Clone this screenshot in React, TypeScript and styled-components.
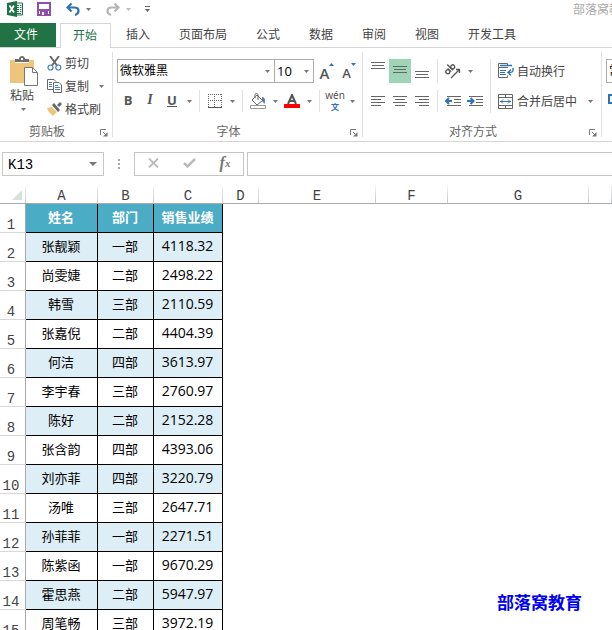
import React from "react";
import styled, { createGlobalStyle, css } from "styled-components";

const ui = `"Noto Sans CJK SC", sans-serif`;
const mono = `"Liberation Mono", "Noto Sans CJK SC", monospace`;

const GlobalStyle = createGlobalStyle`
  * { box-sizing: border-box; }
  body { margin: 0; background: #fff; overflow: hidden; }
  button, input, select { font: inherit; color: inherit; margin: 0; }
  svg { display: block; flex: none; }
`;

const Page = styled.div`
  display: flex;
  flex-direction: column;
  height: 100vh;
  overflow: hidden;
  background: #fff;
  color: #444;
  font: 12px/16px ${ui};
`;

const plainButton = css`
  display: flex;
  align-items: center;
  justify-content: center;
  padding: 0;
  border: 0;
  background: transparent;
  white-space: nowrap;
`;

/* Title bar */
const TitleBar = styled.header`
  display: flex;
  flex: none;
  align-items: center;
  height: 22px;
  padding: 0 0 4px 7px;
`;
const QuickButton = styled.button<{ $gap?: number }>`
  ${plainButton}
  margin-left: ${(p) => p.$gap ?? 0}px;
`;
const DocTitle = styled.span`
  flex: none;
  width: 39px;
  margin-left: auto;
  overflow: hidden;
  color: #aaa;
  white-space: nowrap;
`;

/* Tabs */
const TabBar = styled.nav`
  display: flex;
  flex: none;
  align-items: stretch;
  height: 26px;
  border-bottom: 1px solid #d5d5d5;
`;
const Tab = styled.button<{ $kind?: "file" | "active" }>`
  ${plainButton}
  flex: none;
  margin-top: 1px;
  padding: 0 14px 2px 15px;
  ${(p) =>
    p.$kind === "file" &&
    css`
      width: 56px;
      margin-right: 4px;
      padding: 0 4px 2px 0;
      background: #217346;
      color: #fff;
    `}
  ${(p) =>
    p.$kind === "active" &&
    css`
      width: 51px;
      margin-bottom: -1px;
      padding: 0 1px 3px 0;
      border: 1px solid #d5d5d5;
      border-bottom: 0;
      background: #fff;
      color: #217346;
    `}
`;

/* Ribbon */
const Ribbon = styled.section`
  display: flex;
  flex: none;
  height: 94px;
  padding: 4px 0;
  overflow: hidden;
  border-bottom: 1px solid #d5d5d5;
`;
const Group = styled.section`
  display: flex;
  flex: none;
  flex-direction: column;
  border-right: 1px solid #e1e1e1;
`;
const GroupBody = styled.div<{ $start: number; $end: number }>`
  display: flex;
  flex: 1;
  padding: 0 ${(p) => p.$end}px 0 ${(p) => p.$start}px;
`;
const GroupFooter = styled.footer`
  display: flex;
  align-items: center;
  height: 13px;
  color: #666;
`;
const GroupLabel = styled.span`
  flex: 1;
  padding-right: 6px;
  text-align: center;
`;
const Launcher = styled.button`
  ${plainButton}
  justify-content: flex-start;
  align-self: flex-end;
  width: 12px;
`;
const Rows = styled.div`
  display: flex;
  flex-direction: column;
  gap: 7px;
  padding-top: 7px;
`;
const Row = styled.div<{ $tall?: boolean }>`
  display: flex;
  align-items: stretch;
  height: ${(p) => (p.$tall ? 24 : 22)}px;
`;
const Tool = styled.button<{ $active?: boolean }>`
  ${plainButton}
  width: 22px;
  background: ${(p) => (p.$active ? "#9fd5b7" : "transparent")};
  color: #555;
  font: 700 13px/16px "Open Sans", sans-serif;
`;
const LetterTool = styled(Tool)`
  padding-bottom: 2px;
`;
const ItalicTool = styled(LetterTool)`
  font: italic 700 14px/16px "Liberation Serif", serif;
`;
const CaretButton = styled.button`
  ${plainButton}
  width: 12px;
`;
const MergeMore = styled(CaretButton)`
  margin-left: 7px;
`;
const Divider = styled.span`
  width: 1px;
  margin: 0 4px;
  background: #e1e1e1;
`;
const TallDivider = styled(Divider)`
  margin: 7px 4px;
  height: 54px;
`;
const PasteButton = styled.button`
  ${plainButton}
  flex-direction: column;
  align-items: flex-start;
  justify-content: flex-start;
  width: 29px;
  padding-top: 4px;
`;
const PasteText = styled.span`
  line-height: 18px;
`;
const PasteCaret = styled.span`
  padding: 4px 0 0 11px;
`;
const ClipboardList = styled.div`
  display: flex;
  flex-direction: column;
  gap: 1px;
  margin-left: 8px;
`;
const TextTool = styled.button`
  ${plainButton}
  justify-content: flex-start;
  gap: 3px;
`;
const ClipboardRow = styled.div`
  display: flex;
  align-items: center;
  gap: 6px;
  height: 22px;
`;
const SelectBox = styled.label<{ $w: number }>`
  position: relative;
  width: ${(p) => p.$w}px;
  & + & { margin-left: -1px; }
  > svg { position: absolute; right: 5px; top: 11px; pointer-events: none; }
`;
const Select = styled.select`
  width: 100%;
  height: 100%;
  padding: 0 0 2px 2px;
  appearance: none;
  border: 1px solid #ababab;
  border-radius: 0;
  background: #fff;
  color: #000;
`;
const SizeSelect = styled(Select)`
  padding: 0 0 0 2px;
  font: 13px/16px "Open Sans", sans-serif;
`;
const FontSizeTools = styled.div`
  display: flex;
  padding-left: 2px;
`;
const WrapTools = styled.div`
  display: flex;
  padding-left: 3px;
`;

/* Formula bar */
const FormulaBar = styled.section`
  display: flex;
  flex: none;
  height: 44px;
  padding: 10px 0 10px 2px;
`;
const NameBox = styled.div`
  display: flex;
  width: 102px;
  border: 1px solid #c6c6c6;
`;
const NameInput = styled.input`
  flex: 1;
  min-width: 0;
  padding: 2px 0 0 5px;
  border: 0;
  outline: 0;
  background: transparent;
  color: #000;
  font: 14px/18px ${mono};
`;
const NameCaret = styled.button`
  ${plainButton}
  width: 20px;
`;
const Grip = styled.span`
  display: flex;
  align-items: center;
  justify-content: center;
  width: 30px;
`;
const FormulaTools = styled.div`
  display: flex;
  justify-content: space-around;
  width: 110px;
  margin-right: 3px;
  border: 1px solid #c6c6c6;
`;
const FormulaButton = styled.button`
  ${plainButton}
  width: 30px;
  padding-bottom: 2px;
  color: #777;
  font: italic 700 16px/18px "Liberation Serif", serif;
  sub { font-size: 11px; line-height: 12px; }
`;
const FormulaInput = styled.input`
  flex: 1;
  min-width: 0;
  border: 1px solid #c6c6c6;
  border-right: 0;
  outline: 0;
`;

/* Sheet */
const SheetArea = styled.main`
  position: relative;
  flex: 1;
  min-height: 0;
  overflow: hidden;
`;
const Sheet = styled.table`
  width: 100%;
  table-layout: fixed;
  border-collapse: separate;
  border-spacing: 0;
`;
const Col = styled.col<{ $w?: number }>`
  width: ${(p) => (p.$w ? `${p.$w}px` : "auto")};
`;
const ColHead = styled.th`
  height: 18px;
  padding: 3px 0 0;
  border-bottom: 1px solid #ababab;
  border-right: 1px solid;
  border-image: linear-gradient(#f4f4f4, #c4cccc 95%, #ababab 95%) 1;
  font: 14px/14px ${mono};
`;
const Corner = styled(ColHead)`
  padding: 0 3px 0 0;
  svg { margin-left: auto; }
`;
const RowHead = styled.th`
  height: 29px;
  padding: 0 3px 0 0;
  border-right: 1px solid #ababab;
  border-bottom: 1px solid #d8d8d8;
  vertical-align: bottom;
  text-align: center;
  font: 14px/13px ${mono};
`;
const Cell = styled.td<{ $band?: boolean; $num?: boolean }>`
  height: 29px;
  padding: 0 1px 2px 0;
  border-right: 1px solid #000;
  border-bottom: 1px solid #000;
  background: ${(p) => (p.$band ? "#ddeef6" : "#fff")};
  color: #000;
  text-align: center;
  font: ${(p) => (p.$num ? `14px/18px "Open Sans", sans-serif` : `13px/18px ${ui}`)};
`;
const TitleCell = styled(Cell)`
  background: #4bacc6;
  color: #fff;
  font-weight: 700;
`;
const Blank = styled.td`
  padding: 0;
`;
const Watermark = styled.div`
  position: absolute;
  right: 30px;
  bottom: 16px;
  color: #0000f0;
  font: 700 17px/24px ${ui};
`;

const Caret = ({ color = "#777", w = 5 }: { color?: string; w?: number }) => (
  <svg width={w} height={Math.ceil(w / 2)} viewBox="0 0 6 3" preserveAspectRatio="none">
    <path d="M0 0h6L3 3z" fill={color} />
  </svg>
);

const LauncherIcon = () => (
  <svg width="8" height="8" viewBox="0 0 8 8" fill="none" stroke="#777">
    <path d="M.5 6V.5H6M3 3l3 3" />
    <path d="M7.5 3v4.500H3z" fill="#777" stroke="none" />
  </svg>
);

const Lines = ({ rows }: { rows: [number, number, number][] }) => (
  <svg width="14" height="24" viewBox="0 0 14 24" stroke="#666">
    {rows.map(([x1, x2, y]) => (
      <path key={y} d={`M${x1} ${y}.5H${x2}`} />
    ))}
  </svg>
);

const ExcelIcon = () => (
  <svg width="16" height="16" viewBox="0 0 16 16">
    <path d="M9 2h6.500v12H9" fill="#fff" stroke="#217346" />
    <path d="M10 4.500h2M13 4.500h1.500M10 6.500h2M13 6.500h1.500M10 8.500h2M13 8.500h1.500M10 10.500h2M13 10.500h1.500M10 12.500h4" stroke="#217346" />
    <path d="M0 2 10 0v16L0 14z" fill="#217346" />
    <path d="m2.500 4.500 4.500 7M7 4.500l-4.500 7" stroke="#fff" strokeWidth="1.700" />
  </svg>
);
const SaveIcon = () => (
  <svg width="14" height="14" viewBox="0 0 14 14">
    <path d="M1 1h12v12H1z" fill="#fff" stroke="#8e4faf" strokeWidth="2" />
    <path d="M2 7h10v2H2zM3 9h8v4H3z" fill="#8e4faf" />
    <path d="M5 10h2v3H5z" fill="#fff" />
  </svg>
);
const UndoIcon = ({ flip, color }: { flip?: boolean; color: string }) => (
  <svg width="14" height="13" viewBox="0 0 14 13" fill="none" stroke={color} strokeWidth="2.200">
    <g transform={flip ? "translate(14 0) scale(-1 1)" : undefined}>
      <path d="M5.500.500 1.500 4.500l4 4M2 4.500h6.500c5 0 5.500 6 .5 7.500" />
    </g>
  </svg>
);
const PasteIcon = () => (
  <svg width="29" height="30" viewBox="0 0 29 30">
    <path d="M0 4h24v23H0z" fill="#eec57a" />
    <path d="M5 6V3h4c0-4 6-4 6 0h4v3z" fill="#6e6e6e" />
    <path d="M5 6h14v1H5z" fill="#fff" />
    <path d="M11 2h2v2h-2z" fill="#fff" />
    <path d="M14.500 11.500h8l5 5v13h-13z" fill="#fff" stroke="#777" />
    <path d="M22.500 11.500v5h5" fill="none" stroke="#777" />
  </svg>
);
const CutIcon = () => (
  <svg width="15" height="15" viewBox="0 0 15 15" fill="none">
    <path d="M3 0l7 9.500M12 0 5 9.500" stroke="#666" strokeWidth="1.900" />
    <circle cx="3.500" cy="11.500" r="2.500" stroke="#4780b8" strokeWidth="1.200" />
    <circle cx="11.300" cy="11.500" r="2.500" stroke="#4780b8" strokeWidth="1.200" />
  </svg>
);
const CopyIcon = () => (
  <svg width="15" height="14" viewBox="0 0 15 14" fill="#fff" stroke="#666">
    <path d="M6 10.500H.500V.500H7l2 2" />
    <path d="M2 3.500h3M2 5.500h3M2 7.500h3" stroke="#4780b8" />
    <path d="M6.500 3.500H12l2.500 2.500v7.500h-8z" />
    <path d="M8 6.500h3M8 8.500h5M8 10.500h5" stroke="#4780b8" />
  </svg>
);
const BrushIcon = () => (
  <svg width="15" height="14" viewBox="0 0 15 14">
    <path d="m0 6 5-1 5 5-4 4C4 12 1 10 0 6z" fill="#eec57a" />
    <path d="m5 3 2-2 6 7-2 2zM10 3l3-3 2 2-3 3z" fill="#666" />
  </svg>
);
const BorderIcon = () => (
  <svg width="14" height="14" viewBox="0 0 14 14" fill="none" stroke="#666">
    <path d="M0 .5h14M0 6.500h14M.5 0v13M6.500 0v13M13.500 0v13" strokeDasharray="1 1" />
    <path d="M0 13.500h14" stroke="#555" />
  </svg>
);
const BucketIcon = () => (
  <svg width="16" height="16" viewBox="0 0 16 16" fill="none" stroke="#666">
    <path d="m7 2 5.500 5.500L7 12 2 7z" />
    <path d="M5 5V1.500C5 0 8 0 8 1.500V7" />
    <path d="M12 4c3 0 3.500 3 2.500 7L12 8z" fill="#4780b8" stroke="none" />
    <path d="M.5 12.500h15v3H.5z" fill="#fff" stroke="#999" />
  </svg>
);
const FontColorIcon = () => (
  <svg width="16" height="14" viewBox="0 0 16 14">
    <path d="M4 10 8 1l4 9M5.500 7h5" fill="none" stroke="#555" strokeWidth="2" />
    <path d="M0 10h16v4H0z" fill="#f00" />
  </svg>
);
const PhoneticTool = styled(Tool)`
  flex-direction: column;
`;
const PhoneticTop = styled.span`
  font: 10px/11px "Noto Sans", sans-serif;
`;
const PhoneticBottom = styled.span`
  color: #2f73b7;
  font: 700 8px/11px ${ui};
`;
const GrowTool = styled(Tool)<{ $size: number }>`
  align-items: flex-end;
  padding-bottom: 2px;
  font-weight: 600;
  font-size: ${(p) => p.$size}px;
  svg { align-self: flex-start; margin-top: 4px; }
`;
const OrientIcon = () => (
  <svg width="18" height="18" viewBox="0 0 18 18" fill="none" stroke="#555" strokeWidth="1.300">
    <g transform="rotate(-45 7 8)">
      <circle cx="3.500" cy="7" r="2" />
      <path d="M5.800 4.500v5M8.200 1.500v8" />
      <circle cx="10.500" cy="7" r="2" />
    </g>
    <path d="m7 16 8.500-8.500M12 7.500h3.500V11" />
  </svg>
);
const IndentIcon = ({ right }: { right?: boolean }) => (
  <svg width="16" height="12" viewBox="0 0 16 12" fill="none" stroke="#666">
    <path d="M2 1.500h14M9 4.500h7M9 7.500h7M2 10.500h14" />
    <path d={right ? "M0 6h6M3.500 3l3 3-3 3" : "M7 6H1M4 3 1 6l3 3"} stroke="#2f73b7" strokeWidth="2" />
  </svg>
);
const WrapIcon = () => (
  <svg width="16" height="16" viewBox="0 0 16 16" fill="none" stroke="#666">
    <path d="M9.500 2V.500H.500v4H10M.500 4.500v10h9V12.500" />
    <path d="M2 7.500h6M2 9.500h5M2 11.500h6" stroke="#2f73b7" />
    <path d="M2 2.500h12M15 5v2c0 2-1 2.500-4.500 2.500M13 6.500l-3 3 3 3" stroke="#2f73b7" strokeWidth="1.400" />
  </svg>
);
const MergeIcon = () => (
  <svg width="16" height="15" viewBox="0 0 16 15" fill="none" stroke="#666">
    <path d="M.500.500h14v14H.500zM.500 3.500h14M.500 11.500h14M7.500.500v3M7.500 11.500v3" />
    <path d="M2 7.500h11M5 5.500 3 7.500l2 2M10 5.500l2 2-2 2" stroke="#2f73b7" />
  </svg>
);
const MoneyIcon = () => (
  <svg width="18" height="14" viewBox="0 0 18 14">
    <path d="M1 1h16v8H1z" fill="#fff" stroke="#2f73b7" strokeWidth="2" />
    <circle cx="9" cy="5" r="2" fill="#2f73b7" />
  </svg>
);

const tabs = ["插入", "页面布局", "公式", "数据", "审阅", "视图", "开发工具"];
const columns = ["A", "B", "C", "D", "E", "F", "G"];
const widths = [26, 72, 56, 69, 36, 117, 72, 141];
const people: [string, string, string][] = [
  ["张靓颖", "一部", "4118.32"],
  ["尚雯婕", "二部", "2498.22"],
  ["韩雪", "三部", "2110.59"],
  ["张嘉倪", "二部", "4404.39"],
  ["何洁", "四部", "3613.97"],
  ["李宇春", "三部", "2760.97"],
  ["陈好", "二部", "2152.28"],
  ["张含韵", "四部", "4393.06"],
  ["刘亦菲", "四部", "3220.79"],
  ["汤唯", "三部", "2647.71"],
  ["孙菲菲", "一部", "2271.51"],
  ["陈紫函", "一部", "9670.29"],
  ["霍思燕", "二部", "5947.97"],
  ["周笔畅", "三部", "3972.19"],
];

const Footer = ({ label }: { label: string }) => (
  <GroupFooter>
    <GroupLabel>{label}</GroupLabel>
    <Launcher aria-label={`${label}设置`}><LauncherIcon /></Launcher>
  </GroupFooter>
);
const More = ({ label }: { label: string }) => (
  <CaretButton aria-label={label}><Caret /></CaretButton>
);

export default function App() {
  return (
    <Page>
      <GlobalStyle />
      <TitleBar>
        <ExcelIcon />
        <QuickButton aria-label="保存" $gap={14}><SaveIcon /></QuickButton>
        <QuickButton aria-label="撤消" $gap={15}><UndoIcon color="#2f73b7" /></QuickButton>
        <QuickButton aria-label="撤消列表" $gap={6}><Caret /></QuickButton>
        <QuickButton aria-label="恢复" $gap={15}><UndoIcon flip color="#b5b5b5" /></QuickButton>
        <QuickButton aria-label="恢复列表" $gap={6}><Caret color="#bbb" /></QuickButton>
        <QuickButton aria-label="自定义快速访问工具栏" $gap={14}>
          <svg width="5" height="6" viewBox="0 0 5 6">
            <path d="M0 0h5v1H0zM0 3h5L2.500 6z" fill="#666" />
          </svg>
        </QuickButton>
        <DocTitle>部落窝教育</DocTitle>
      </TitleBar>

      <TabBar>
        <Tab $kind="file">文件</Tab>
        <Tab $kind="active">开始</Tab>
        {tabs.map((t) => <Tab key={t}>{t}</Tab>)}
      </TabBar>

      <Ribbon>
        <Group>
          <GroupBody $start={10} $end={5}>
            <PasteButton>
              <PasteIcon />
              <PasteText>粘贴</PasteText>
              <PasteCaret><Caret /></PasteCaret>
            </PasteButton>
            <ClipboardList>
              <ClipboardRow><TextTool><CutIcon />剪切</TextTool></ClipboardRow>
              <ClipboardRow>
                <TextTool><CopyIcon />复制</TextTool>
                <More label="复制选项" />
              </ClipboardRow>
              <ClipboardRow><TextTool><BrushIcon />格式刷</TextTool></ClipboardRow>
            </ClipboardList>
          </GroupBody>
          <Footer label="剪贴板" />
        </Group>

        <Group>
          <GroupBody $start={4} $end={2}>
            <Rows>
              <Row $tall>
                <SelectBox $w={158}>
                  <Select aria-label="字体"><option>微软雅黑</option></Select>
                  <Caret />
                </SelectBox>
                <SelectBox $w={40}>
                  <SizeSelect aria-label="字号"><option>10</option></SizeSelect>
                  <Caret />
                </SelectBox>
                <FontSizeTools>
                  <GrowTool aria-label="增大字号" $size={15}>
                    A<svg width="5" height="3"><path d="M0 3h5L2.500 0z" fill="#2f73b7" /></svg>
                  </GrowTool>
                  <GrowTool aria-label="减小字号" $size={13}>
                    A<svg width="5" height="3"><path d="M0 0h5L2.500 3z" fill="#2f73b7" /></svg>
                  </GrowTool>
                </FontSizeTools>
              </Row>
              <Row>
                <LetterTool>B</LetterTool>
                <ItalicTool>I</ItalicTool>
                <LetterTool><u>U</u></LetterTool>
                <More label="下划线选项" />
                <Divider />
                <Tool aria-label="边框"><BorderIcon /></Tool>
                <More label="边框选项" />
                <Divider />
                <Tool aria-label="填充颜色"><BucketIcon /></Tool>
                <More label="填充选项" />
                <Tool aria-label="字体颜色"><FontColorIcon /></Tool>
                <More label="颜色选项" />
                <Divider />
                <PhoneticTool>
                  <PhoneticTop>wén</PhoneticTop>
                  <PhoneticBottom>文</PhoneticBottom>
                </PhoneticTool>
                <More label="拼音选项" />
              </Row>
            </Rows>
          </GroupBody>
          <Footer label="字体" />
        </Group>

        <Group>
          <GroupBody $start={4} $end={5}>
            <Rows>
              <Row $tall>
                <Tool aria-label="顶端对齐"><Lines rows={[[0, 14, 3], [1, 13, 6], [0, 14, 9]]} /></Tool>
                <Tool aria-label="垂直居中" $active><Lines rows={[[0, 14, 7], [1, 13, 10], [0, 14, 13]]} /></Tool>
                <Tool aria-label="底端对齐"><Lines rows={[[0, 14, 12], [1, 13, 15], [0, 14, 18]]} /></Tool>
                <Divider />
                <Tool aria-label="方向"><OrientIcon /></Tool>
                <More label="方向选项" />
              </Row>
              <Row>
                <Tool aria-label="左对齐"><Lines rows={[[0, 14, 7], [0, 10, 10], [0, 14, 13], [0, 10, 16]]} /></Tool>
                <Tool aria-label="居中"><Lines rows={[[0, 14, 7], [2, 12, 10], [0, 14, 13], [2, 12, 16]]} /></Tool>
                <Tool aria-label="右对齐"><Lines rows={[[0, 14, 7], [4, 14, 10], [0, 14, 13], [4, 14, 16]]} /></Tool>
                <Divider />
                <Tool aria-label="减少缩进量"><IndentIcon /></Tool>
                <Tool aria-label="增加缩进量"><IndentIcon right /></Tool>
              </Row>
            </Rows>
            <TallDivider />
            <Rows>
              <Row $tall><WrapTools><TextTool><WrapIcon />自动换行</TextTool></WrapTools></Row>
              <Row>
                <WrapTools>
                  <TextTool><MergeIcon />合并后居中</TextTool>
                </WrapTools>
                <MergeMore aria-label="合并选项"><Caret /></MergeMore>
              </Row>
            </Rows>
          </GroupBody>
          <Footer label="对齐方式" />
        </Group>

        <Group>
          <GroupBody $start={4} $end={4}>
            <Rows>
              <Row $tall>
                <SelectBox $w={90}>
                  <Select aria-label="数字格式"><option>常规</option></Select>
                  <Caret />
                </SelectBox>
              </Row>
              <Row><Tool aria-label="会计数字格式"><MoneyIcon /></Tool></Row>
            </Rows>
          </GroupBody>
        </Group>
      </Ribbon>

      <FormulaBar>
        <NameBox>
          <NameInput aria-label="名称框" defaultValue="K13" />
          <NameCaret aria-label="名称列表"><Caret w={8} /></NameCaret>
        </NameBox>
        <Grip>
          <svg width="2" height="10" fill="#aaa">
            <path d="M0 0h2v2H0zM0 4h2v2H0zM0 8h2v2H0z" />
          </svg>
        </Grip>
        <FormulaTools>
          <FormulaButton aria-label="取消">
            <svg width="11" height="10" viewBox="0 0 11 10" stroke="#bbb" strokeWidth="1.800">
              <path d="m1 .5 9 9M10 .5l-9 9" />
            </svg>
          </FormulaButton>
          <FormulaButton aria-label="输入">
            <svg width="13" height="10" viewBox="0 0 13 10" fill="none" stroke="#bbb" strokeWidth="2.500">
              <path d="m1 5 3.500 3.500L12 1" />
            </svg>
          </FormulaButton>
          <FormulaButton aria-label="插入函数">f<sub>x</sub></FormulaButton>
        </FormulaTools>
        <FormulaInput aria-label="编辑栏" />
      </FormulaBar>

      <SheetArea>
        <Sheet>
          <colgroup>
            {widths.map((w, i) => <Col key={i} $w={w} />)}
            <Col />
          </colgroup>
          <thead>
            <tr>
              <Corner aria-label="全选">
                <svg width="10" height="10"><path d="M10 0v10H0z" fill="#d5e3dc" /></svg>
              </Corner>
              {columns.map((c) => <ColHead key={c} scope="col">{c}</ColHead>)}
              <ColHead />
            </tr>
          </thead>
          <tbody>
            <tr>
              <RowHead scope="row">1</RowHead>
              <TitleCell>姓名</TitleCell>
              <TitleCell>部门</TitleCell>
              <TitleCell>销售业绩</TitleCell>
              <Blank colSpan={5} />
            </tr>
            {people.map(([name, dept, sales], i) => (
              <tr key={name}>
                <RowHead scope="row">{i + 2}</RowHead>
                <Cell $band={i % 2 === 0}>{name}</Cell>
                <Cell $band={i % 2 === 0}>{dept}</Cell>
                <Cell $band={i % 2 === 0} $num>{sales}</Cell>
                <Blank colSpan={5} />
              </tr>
            ))}
          </tbody>
        </Sheet>
        <Watermark>部落窝教育</Watermark>
      </SheetArea>
    </Page>
  );
}
